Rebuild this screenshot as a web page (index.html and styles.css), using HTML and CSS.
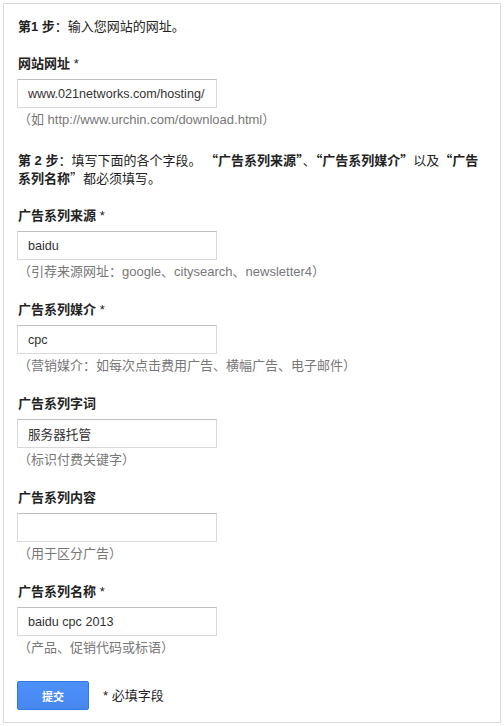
FILE: index.html
```html
<!DOCTYPE html>
<html>
<head>
	<meta charset="UTF-8">
	<title>网址构建工具</title>
	<link rel="stylesheet" href="styles.css">
</head>
<body>
	<div class="builder">
		<p class="step"><b>第1 步</b>：输入您网站的网址。</p>

		<div class="field">
			<label><b>网站网址</b> *</label>
			<input type="text" value="www.021networks.com/hosting/">
			<p class="hint">（如 http://www.urchin.com/download.html）</p>
		</div>

		<p class="step step-two"><b>第 2 步</b>：填写下面的各个字段。 <b><span class="q">“</span>广告系列来源<span class="q">”</span></b>、<b><span class="q">“</span>广告系列媒介<span class="q">”</span></b>以及<b><span class="q">“</span>广告系列名称</b><span class="q">”</span>都必须填写。</p>

		<div class="field">
			<label><b>广告系列来源</b> *</label>
			<input type="text" value="baidu">
			<p class="hint">（引荐来源网址：google、citysearch、newsletter4）</p>
		</div>

		<div class="field">
			<label><b>广告系列媒介</b> *</label>
			<input type="text" value="cpc">
			<p class="hint">（营销媒介：如每次点击费用广告、横幅广告、电子邮件）</p>
		</div>

		<div class="field">
			<label><b>广告系列字词</b></label>
			<input type="text" value="服务器托管">
			<p class="hint">（标识付费关键字）</p>
		</div>

		<div class="field">
			<label><b>广告系列内容</b></label>
			<input type="text" value="">
			<p class="hint">（用于区分广告）</p>
		</div>

		<div class="field">
			<label><b>广告系列名称</b> *</label>
			<input type="text" value="baidu cpc 2013">
			<p class="hint">（产品、促销代码或标语）</p>
		</div>

		<div class="actions">
			<button class="submit-btn">提交</button>
			<span class="required">* 必填字段</span>
		</div>
	</div>
</body>
</html>
```

FILE: styles.css
```css
* {
	box-sizing: border-box;
}
body {
	margin: 0;
	padding: 3px;
	font-family: "Liberation Sans", Arial, "Noto Sans CJK SC", sans-serif;
	font-size: 13px;
	line-height: 18px;
	color: #222;
	background: #fff;
}
.builder {
	width: 498px;
	height: 720px;
	border: 1px solid #d9d9d9;
	padding: 14px 14px 0 14px;
}
p {
	margin: 0;
}
.step b, label b {
	font-weight: bold;
}
.q {
	font-family: "Noto Sans CJK SC", sans-serif;
	line-height: 10px;
}
.step-two {
	margin-top: 23px;
}
.field {
	margin-top: 19px;
}
.field + .field {
	margin-top: 20px;
}
label {
	display: block;
	margin-bottom: 6px;
}
input {
	display: block;
	width: 200px;
	height: 29px;
	margin-left: -1px;
	padding: 0 3px 0 10px;
	border: 1px solid #d9d9d9;
	border-top-color: #c0c0c0;
	font-family: inherit;
	font-size: 12.6px;
	color: #333;
	outline: none;
}
.hint {
	margin-top: 3px;
	color: #777;
}
.actions {
	display: flex;
	align-items: center;
	margin-top: 24px;
	margin-left: -1px;
}
.submit-btn {
	width: 72px;
	height: 29px;
	border: 1px solid #3079ed;
	border-radius: 2px;
	background: linear-gradient(#4d90fe, #4787ed);
	color: #fff;
	font-family: inherit;
	font-size: 11px;
	font-weight: bold;
	cursor: pointer;
}
.required {
	margin-left: 14px;
}
```
